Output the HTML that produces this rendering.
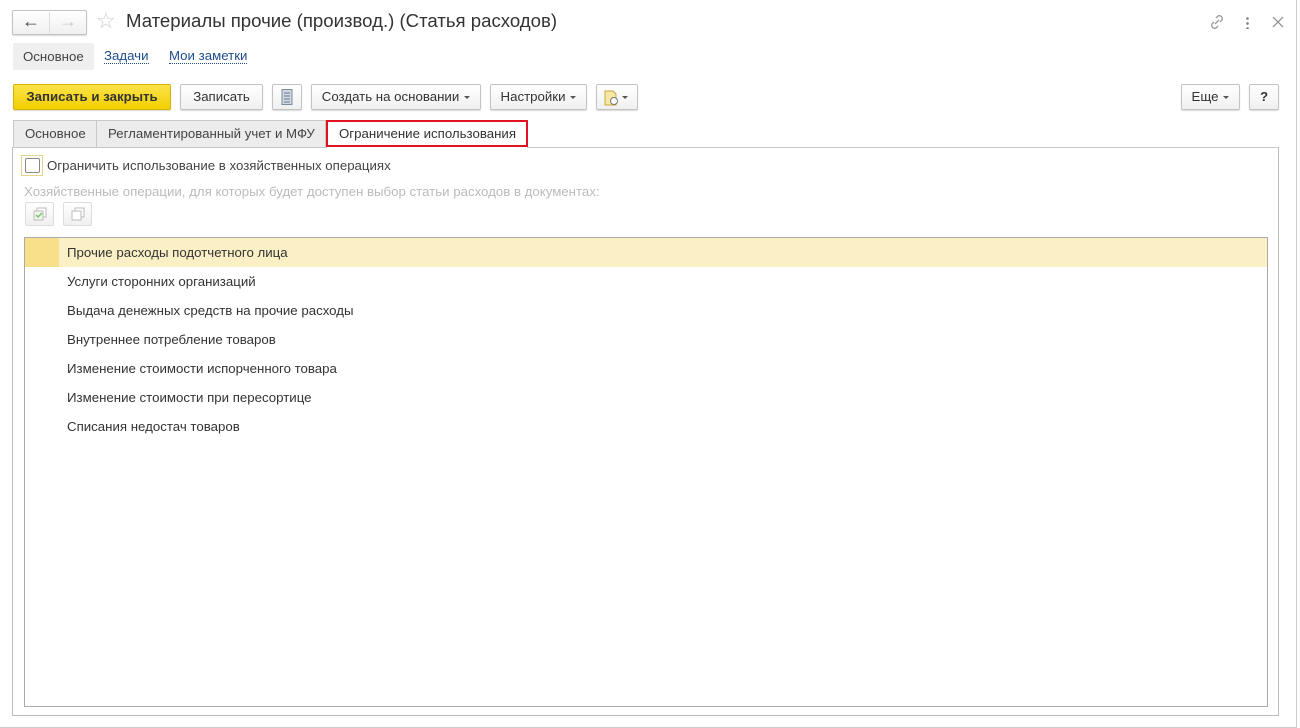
<!DOCTYPE html>
<html><head><meta charset="utf-8"><style>
*{box-sizing:border-box}
body{margin:0;width:1300px;height:728px;background:#fff;font-family:"Liberation Sans",Arial,sans-serif;font-size:13.25px;color:#333;position:relative;overflow:hidden}
.abs{position:absolute}
.btn{position:absolute;height:26px;border:1px solid #c3c3c3;border-radius:2px;background:linear-gradient(#fff,#f0f0f0);box-shadow:0 1px 1px rgba(0,0,0,.15);font-size:13.25px;line-height:24px;text-align:center;color:#333}
.arr{display:inline-block;width:0;height:0;border-left:3px solid transparent;border-right:3px solid transparent;border-top:3px solid #555;vertical-align:middle;margin-left:5px}
.row{position:absolute;left:25px;width:1241px;height:29px;line-height:29px;padding-left:42px;color:#333}
</style></head><body>
<div class="abs" style="right:3px;top:0;width:1px;height:728px;background:#ccc"></div>
<div class="abs" style="left:0;bottom:0;width:1297px;height:1px;background:#ccc"></div>

<div class="btn" style="left:12px;top:10px;width:75px;height:25px"></div>
<div class="abs" style="left:49px;top:12px;width:1px;height:21px;background:#ddd"></div>
<div class="abs" style="left:22px;top:11px;font-size:18px;color:#444">&#8592;</div>
<div class="abs" style="left:59px;top:11px;font-size:18px;color:#ccc">&#8594;</div>
<div class="abs" style="left:96px;top:8px;font-size:22px;color:#ccc">&#9734;</div>
<div class="abs" style="left:126px;top:10px;font-size:18.6px;color:#333">Материалы прочие (производ.) (Статья расходов)</div>
<svg class="abs" style="left:1208px;top:13px" width="18" height="18" viewBox="0 0 18 18" fill="none" stroke="#999" stroke-width="1.3"><path d="M8 5l2-2a3 3 0 0 1 4 4l-2 2M10 13l-2 2a3 3 0 0 1-4-4l2-2M7 11l4-4"/></svg>
<div class="abs" style="left:1246px;top:16px;width:3px;height:13px;background:radial-gradient(circle,#888 1.2px,transparent 1.5px) 0 0/3px 5px"></div>
<svg class="abs" style="left:1272px;top:16px" width="12" height="12" viewBox="0 0 12 12" stroke="#888" stroke-width="1.2"><path d="M1 1l10 10M11 1L1 11"/></svg>

<div class="abs" style="left:13px;top:43px;width:81px;height:27px;background:#efefef;border-radius:2px"></div>
<div class="abs" style="left:23px;top:49px;color:#444">Основное</div>
<div class="abs" style="left:104px;top:49px;color:#1f4d8c;border-bottom:1px dotted #1f4d8c;line-height:14px">Задачи</div>
<div class="abs" style="left:169px;top:49px;color:#1f4d8c;border-bottom:1px dotted #1f4d8c;line-height:14px">Мои заметки</div>

<div class="btn" style="left:13px;top:84px;width:158px;background:linear-gradient(#fbe34a,#f2cf00);border-color:#d4b600;font-weight:bold;color:#333">Записать и закрыть</div>
<div class="btn" style="left:180px;top:84px;width:83px">Записать</div>
<div class="btn" style="left:272px;top:84px;width:30px"><svg width="12" height="16" style="margin-top:4px" viewBox="0 0 12 16"><rect x="1" y="0.5" width="10" height="15" fill="#cfd8e2" stroke="#7d8a99"/><path d="M3 4h6M3 7h6M3 10h6M3 13h6" stroke="#6b7a8c"/></svg></div>
<div class="btn" style="left:311px;top:84px;width:170px">Создать на основании<span class="arr"></span></div>
<div class="btn" style="left:490px;top:84px;width:97px">Настройки<span class="arr"></span></div>
<div class="btn" style="left:596px;top:84px;width:42px;text-align:left;padding-left:7px"><svg width="15" height="16" style="vertical-align:middle" viewBox="0 0 15 16"><path d="M1 1h8l3 3v11H1z" fill="#f7e7a6" stroke="#c9a83a"/><circle cx="10" cy="11" r="3.5" fill="#fff" stroke="#777"/></svg><span class="arr" style="margin-left:3px"></span></div>
<div class="btn" style="left:1181px;top:84px;width:59px">Еще<span class="arr"></span></div>
<div class="btn" style="left:1249px;top:84px;width:30px;font-weight:bold">?</div>

<div class="abs" style="left:13px;top:120px;width:84px;height:28px;background:#ececec;border:1px solid #c8c8c8;border-bottom:none;line-height:25px;padding-left:11px;color:#444">Основное</div>
<div class="abs" style="left:96px;top:120px;width:230px;height:28px;background:#ececec;border:1px solid #c8c8c8;border-bottom:none;line-height:25px;padding-left:11px;color:#444">Регламентированный учет и МФУ</div>
<div class="abs" style="left:326px;top:120px;width:202px;height:27px;border:2px solid #e0141e;line-height:23px;padding-left:11px;color:#333">Ограничение использования</div>
<div class="abs" style="left:12px;top:147px;width:1267px;height:569px;border:1px solid #bcbcbc;border-top:1px solid #c8c8c8"></div>
<div class="abs" style="left:327px;top:147px;width:200px;height:1px;background:#fff"></div>

<div class="abs" style="left:21px;top:155px;width:22px;height:21px;border:1px solid #e6d68a"></div>
<div class="abs" style="left:25px;top:158px;width:15px;height:15px;border:1px solid #888;border-radius:2px;background:#fff"></div>
<div class="abs" style="left:47px;top:158px;color:#444">Ограничить использование в хозяйственных операциях</div>
<div class="abs" style="left:24px;top:184px;color:#bbb">Хозяйственные операции, для которых будет доступен выбор статьи расходов в документах:</div>
<div class="btn" style="left:25px;top:202px;width:29px;height:24px;box-shadow:none;border-color:#ddd"><svg width="14" height="14" style="margin-top:4px" viewBox="0 0 14 14"><rect x="4" y="1" width="9" height="9" fill="#fff" stroke="#bbb"/><rect x="1" y="4" width="9" height="9" fill="#eef7ea" stroke="#bbb"/><path d="M3 8l2 2 4-4" stroke="#7cbf6a" fill="none" stroke-width="1.5"/></svg></div>
<div class="btn" style="left:63px;top:202px;width:29px;height:24px;box-shadow:none;border-color:#ddd"><svg width="14" height="14" style="margin-top:4px" viewBox="0 0 14 14"><rect x="4" y="1" width="9" height="9" fill="#fff" stroke="#bbb"/><rect x="1" y="4" width="9" height="9" fill="#fff" stroke="#bbb"/></svg></div>

<div class="abs" style="left:24px;top:237px;width:1244px;height:470px;border:1px solid #aaa"></div>
<div class="abs" style="left:25px;top:238px;width:1242px;height:29px;background:#fbf0c5"></div>
<div class="abs" style="left:25px;top:238px;width:34px;height:29px;background:#f8df8a"></div>
<div class="row" style="top:238px">Прочие расходы подотчетного лица</div>
<div class="row" style="top:267px">Услуги сторонних организаций</div>
<div class="row" style="top:296px">Выдача денежных средств на прочие расходы</div>
<div class="row" style="top:325px">Внутреннее потребление товаров</div>
<div class="row" style="top:354px">Изменение стоимости испорченного товара</div>
<div class="row" style="top:383px">Изменение стоимости при пересортице</div>
<div class="row" style="top:412px">Списания недостач товаров</div>
</body></html>
